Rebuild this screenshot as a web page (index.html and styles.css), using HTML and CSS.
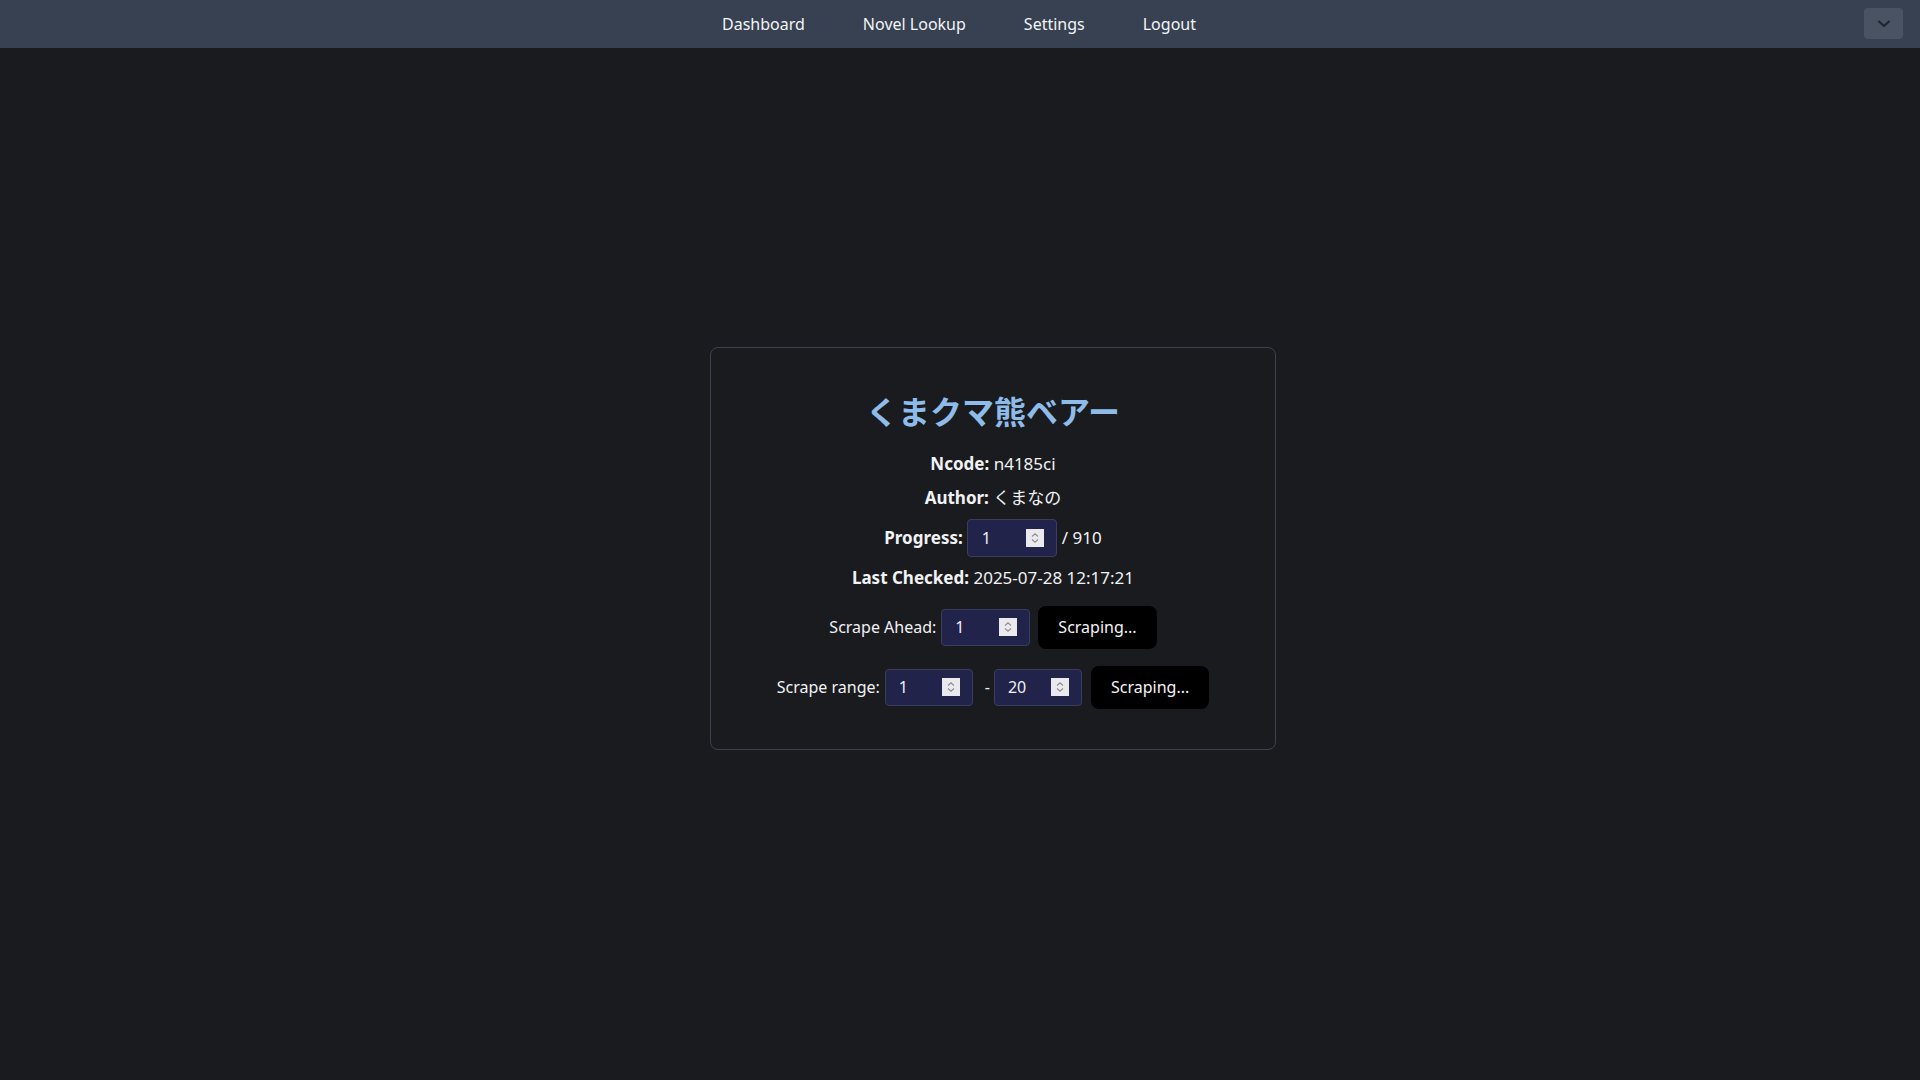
FILE: index.html
```html
<!DOCTYPE html>
<html lang="en">
<head>
<meta charset="utf-8">
<title>くまクマ熊ベアー</title>
<link rel="stylesheet" href="styles.css">
</head>
<body>
<header class="navbar">
  <div class="nav-spacer"></div>
  <nav class="nav-links">
    <a href="#" class="nav-link">Dashboard</a>
    <a href="#" class="nav-link">Novel Lookup</a>
    <a href="#" class="nav-link">Settings</a>
    <a href="#" class="nav-link">Logout</a>
  </nav>
  <div class="nav-right">
    <button class="menu-btn" aria-label="menu">
      <svg width="14" height="10" viewBox="0 0 14 10"><path d="M2 2.5 L7 7 L12 2.5" fill="none" stroke="#1f2430" stroke-width="2" stroke-linecap="round" stroke-linejoin="round"/></svg>
    </button>
  </div>
</header>
<main class="main">
  <section class="card">
    <h1 class="title">くまクマ熊ベアー</h1>
    <div class="info">
      <p class="line"><b>Ncode:</b> n4185ci</p>
      <p class="line"><b>Author:</b> <span class="jp">くまなの</span></p>
      <div class="line row">
        <b>Progress:</b>
        <label class="num num-progress"><input type="text" value="1"><span class="spin"><svg width="18" height="18" viewBox="0 0 18 18"><path d="M6 7.5 L9 4.8 L12 7.5" fill="none" stroke="#8d8d93" stroke-width="1.1"/><path d="M6 10.5 L9 13.2 L12 10.5" fill="none" stroke="#8d8d93" stroke-width="1.1"/></svg></span></label>
        <span class="after">/ 910</span>
      </div>
      <p class="line"><b>Last Checked:</b> 2025-07-28 12:17:21</p>
    </div>
    <div class="controls">
      <div class="row ctl">
        <span class="lbl">Scrape Ahead:</span>
        <label class="num num-ahead"><input type="text" value="1"><span class="spin"><svg width="18" height="18" viewBox="0 0 18 18"><path d="M6 7.5 L9 4.8 L12 7.5" fill="none" stroke="#8d8d93" stroke-width="1.1"/><path d="M6 10.5 L9 13.2 L12 10.5" fill="none" stroke="#8d8d93" stroke-width="1.1"/></svg></span></label>
        <button class="btn">Scraping...</button>
      </div>
      <div class="row ctl">
        <span class="lbl">Scrape range:</span>
        <label class="num num-range"><input type="text" value="1"><span class="spin"><svg width="18" height="18" viewBox="0 0 18 18"><path d="M6 7.5 L9 4.8 L12 7.5" fill="none" stroke="#8d8d93" stroke-width="1.1"/><path d="M6 10.5 L9 13.2 L12 10.5" fill="none" stroke="#8d8d93" stroke-width="1.1"/></svg></span></label>
        <span class="dash">-</span>
        <label class="num num-range"><input type="text" value="20"><span class="spin"><svg width="18" height="18" viewBox="0 0 18 18"><path d="M6 7.5 L9 4.8 L12 7.5" fill="none" stroke="#8d8d93" stroke-width="1.1"/><path d="M6 10.5 L9 13.2 L12 10.5" fill="none" stroke="#8d8d93" stroke-width="1.1"/></svg></span></label>
        <button class="btn btn-range">Scraping...</button>
      </div>
    </div>
  </section>
</main>
</body>
</html>
```
FILE: styles.css
```css
* { box-sizing: border-box; }
html, body { margin: 0; padding: 0; }
body {
  background: #1a1b1e;
  color: #f1f2f4;
  font-family: "Noto Sans", "Noto Sans CJK JP", sans-serif;
  font-size: 16px;
  line-height: 24px;
  min-height: 100vh;
}
.navbar {
  height: 48px;
  background: #374151;
  display: grid;
  grid-template-columns: 1fr auto 1fr;
  align-items: center;
}
.nav-links {
  display: flex;
  gap: 58px;
  padding-right: 2px;
}
.nav-link {
  color: #f3f4f6;
  text-decoration: none;
  font-size: 16px;
}
.nav-right {
  display: flex;
  justify-content: flex-end;
  padding-right: 17px;
}
.menu-btn {
  width: 39px;
  height: 31px;
  border: none;
  border-radius: 4px;
  background: #4a5363;
  display: flex;
  align-items: center;
  justify-content: center;
  padding: 0;
  margin-top: -1px;
}
.main {
  min-height: calc(100vh - 48px);
  display: flex;
  align-items: center;
  justify-content: center;
  padding: 1px 0 33px 66px;
}
.card {
  width: 566px;
  border: 1px solid #3a4252;
  border-radius: 8px;
  padding: 38px 40px 40px;
  display: flex;
  flex-direction: column;
  align-items: center;
}
.title {
  margin: 0 0 18px;
  font-family: "Noto Sans CJK JP", "Noto Sans", sans-serif;
  font-size: 32px;
  line-height: 48px;
  font-weight: 700;
  color: #8fbbe8;
}
.info {
  display: flex;
  flex-direction: column;
  align-items: center;
  gap: 9px;
  font-size: 17px;
}
.line {
  margin: 0;
}
.line b { font-weight: 700; }
.jp { font-family: "Noto Sans CJK JP", sans-serif; }
.row {
  display: flex;
  align-items: center;
  justify-content: center;
}
.num {
  display: flex;
  align-items: center;
  height: 37px;
  width: 89px;
  margin-left: 4px;
  padding: 0 12px 0 13px;
  background: #22234a;
  border: 1px solid #3a3e5e;
  border-radius: 4px;
  font-size: 16px;
}
.num input {
  flex: 1;
  min-width: 0;
  width: 0;
  background: transparent;
  border: none;
  outline: none;
  padding: 0;
  color: #eef0f4;
  font: inherit;
}
.spin {
  width: 18px;
  height: 18px;
  background: #e9e9ee;
  display: block;
}
.spin svg { display: block; }
.num-progress { height: 38px; width: 90px; padding-left: 14px; }
.after { margin-left: 5px; }
.controls {
  margin-top: 16px;
  display: flex;
  flex-direction: column;
  align-items: center;
  gap: 17px;
}
.ctl { height: 43px; }
.lbl { margin-right: 1px; }
.num-range { width: 88px; }
.dash { margin: 0 4px 0 12px; }
.dash + .num { margin-left: 0; }
.btn {
  height: 43px;
  margin-left: 8px;
  padding: 0 20px;
  background: #000;
  color: #f3f4f6;
  border: none;
  border-radius: 8px;
  font: inherit;
}
.btn-range { margin-left: 9px; }
```
